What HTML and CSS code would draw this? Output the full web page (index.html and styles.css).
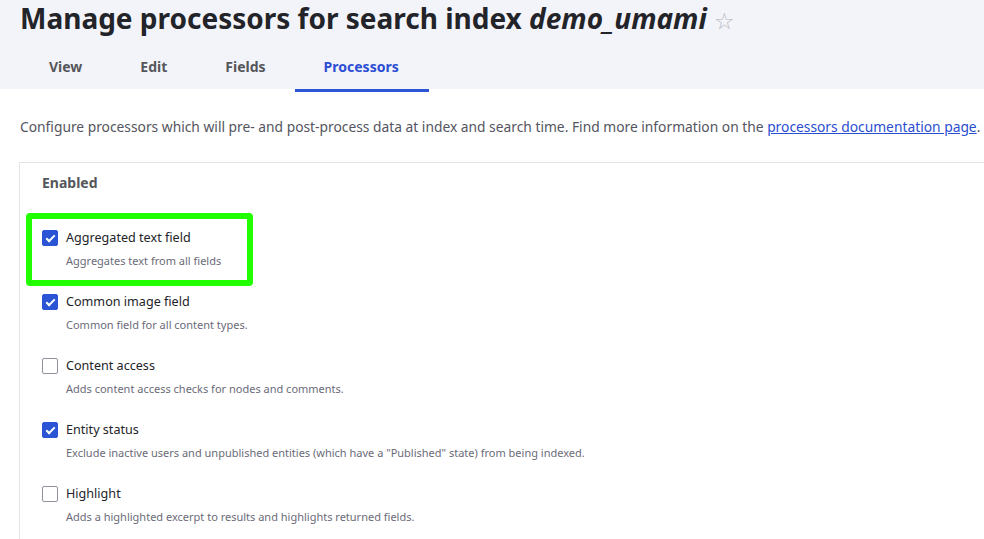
FILE: index.html
```html
<!DOCTYPE html>
<html>
<head>
  <title>Manage processors for search index demo_umami</title>
  <link rel="stylesheet" href="styles.css">
</head>
<body>
  <div class="page-header">
    <h1 class="page-title">Manage processors for search index <em>demo_umami</em> <span class="star">☆</span></h1>
    <nav class="tabs">
      <a class="tab" href="#">View</a>
      <a class="tab" href="#">Edit</a>
      <a class="tab" href="#">Fields</a>
      <a class="tab active" href="#">Processors</a>
    </nav>
  </div>

  <div class="content">
    <p class="intro">Configure processors which will pre- and post-process data at index and search time. Find more information on the <a href="#">processors documentation page</a>.</p>

    <div class="card">
      <div class="card-title">Enabled</div>

      <div class="item highlighted">
        <div class="item-row"><span class="check on"></span><span class="label">Aggregated text field</span></div>
        <div class="desc">Aggregates text from all fields</div>
      </div>

      <div class="item">
        <div class="item-row"><span class="check on"></span><span class="label">Common image field</span></div>
        <div class="desc">Common field for all content types.</div>
      </div>

      <div class="item">
        <div class="item-row"><span class="check"></span><span class="label">Content access</span></div>
        <div class="desc">Adds content access checks for nodes and comments.</div>
      </div>

      <div class="item">
        <div class="item-row"><span class="check on"></span><span class="label">Entity status</span></div>
        <div class="desc">Exclude inactive users and unpublished entities (which have a "Published" state) from being indexed.</div>
      </div>

      <div class="item">
        <div class="item-row"><span class="check"></span><span class="label">Highlight</span></div>
        <div class="desc">Adds a highlighted excerpt to results and highlights returned fields.</div>
      </div>
    </div>
  </div>
</body>
</html>
```

FILE: styles.css
```css
body {
  margin: 0;
  font-family: 'Noto Sans', sans-serif;
  color: #232429;
  background: white;
  overflow: hidden;
}

.page-header {
  background: #f3f4f9;
  height: 89px;
  padding: 0 20px;
}

.page-title {
  margin: 0;
  padding-top: 1px;
  font-size: 28px;
  line-height: 34px;
  font-weight: bold;
  color: #232429;
  white-space: nowrap;
}

.page-title em {
  font-style: italic;
}

.star {
  font-family: 'DejaVu Sans', sans-serif;
  font-weight: normal;
  color: #b8b8c0;
  font-size: 23px;
}

.tabs {
  display: flex;
  margin-top: 13px;
}

.tab {
  padding: 0 28px 0 29px;
  height: 41px;
  line-height: 32px;
  font-size: 14px;
  font-weight: bold;
  color: #55565b;
  text-decoration: none;
  box-sizing: border-box;
}

.tab + .tab {
  margin-left: 1px;
}

.tab.active {
  color: #2b4ed3;
  border-bottom: 3px solid #2b55d5;
  padding-right: 30px;
}

.content {
  padding: 0 0 0 19px;
}

.intro {
  margin: 28px 0 26px 1px;
  font-size: 13.8px;
  color: #545560;
  white-space: nowrap;
}

.intro a {
  color: #2a4ed0;
}

.card {
  border: 1px solid #e3e3ea;
  border-right: none;
  padding: 10px 0 0 22px;
}

.card-title {
  font-size: 14px;
  font-weight: bold;
  color: #55565b;
  margin-bottom: 37px;
}

.item {
  position: relative;
  height: 64px;
}

.item-row {
  display: flex;
  align-items: center;
  gap: 8px;
}

.check {
  width: 16px;
  height: 16px;
  box-sizing: border-box;
  border: 1px solid #8e929c;
  border-radius: 2px;
  background: white;
  position: relative;
}

.check.on {
  background: #2b55d5;
  border-color: #2b55d5;
}

.check.on::after {
  content: "";
  position: absolute;
  left: 5px;
  top: 2px;
  width: 3px;
  height: 7px;
  border: solid white;
  border-width: 0 2px 2px 0;
  transform: rotate(45deg);
}

.label {
  font-size: 12.6px;
  color: #232429;
}

.desc {
  margin: 7px 0 0 24px;
  font-size: 11px;
  color: #6b6b78;
}

.highlighted::before {
  content: "";
  position: absolute;
  left: -16px;
  top: -16px;
  width: 227px;
  height: 73px;
  box-sizing: border-box;
  border: 6px solid #22ff00;
  border-radius: 4px;
}
```
